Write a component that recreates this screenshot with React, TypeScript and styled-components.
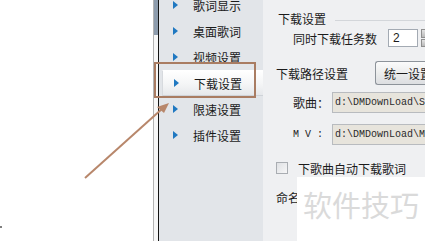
import React from "react";
import styled, { createGlobalStyle } from "styled-components";

const GlobalStyle = createGlobalStyle`
  html, body {
    margin: 0;
    padding: 0;
    background: #ffffff;
  }
  body {
    font-family: "Noto Sans CJK SC", "Noto Sans", sans-serif;
    font-size: 12px;
    color: #1b1b1b;
  }
`;

const Screen = styled.div`
  position: relative;
  width: 425px;
  height: 241px;
  overflow: hidden;
  display: flex;
  background: #ffffff;
`;

const Blank = styled.div`
  width: 153px;
  flex-shrink: 0;
  background: #ffffff;
`;

const ScrollStrip = styled.div`
  width: 4px;
  flex-shrink: 0;
  display: flex;
  flex-direction: column;
  border-left: 1px solid #b3b3b3;
  background: #f7f7f7;
`;

const ScrollThumb = styled.div`
  height: 35px;
  background: #8d9cad;
`;

const DarkEdge = styled.div`
  width: 1px;
  flex-shrink: 0;
  background: #141414;
`;

const Sidebar = styled.ul`
  width: 104px;
  flex-shrink: 0;
  margin: 0;
  padding: 0;
  list-style: none;
  background: #e2e5e9;
  display: flex;
  flex-direction: column;
`;

const MenuItem = styled.li<{ $active?: boolean; $first?: boolean }>`
  height: 26px;
  flex-shrink: 0;
  display: flex;
  align-items: center;
  margin-top: ${({ $first }) => ($first ? "-8px" : "0")};
  margin-left: ${({ $active }) => ($active ? "3px" : "0")};
  padding-left: ${({ $active }) => ($active ? "11px" : "14px")};
  box-sizing: border-box;
  background: ${({ $active }) =>
    $active ? "linear-gradient(#ffffff, #f4f5f6 55%, #e6e8eb)" : "transparent"};
  border-top: ${({ $active }) => ($active ? "1px solid #ffffff" : "none")};
  border-bottom: ${({ $active }) => ($active ? "1px solid #cfd3d8" : "none")};
  border-left: ${({ $active }) => ($active ? "1px solid #d7dade" : "none")};
  font-size: 12px;
  white-space: nowrap;
`;

const Bullet = styled.span`
  width: 0;
  height: 0;
  border-top: 4px solid transparent;
  border-bottom: 4px solid transparent;
  border-left: 5px solid #1f78c1;
  margin-right: 15px;
`;

const Main = styled.div`
  flex: 1;
  min-width: 0;
  background: #eff0f2;
  display: flex;
  flex-direction: column;
  padding-top: 9px;
  white-space: nowrap;
`;

const GroupHead = styled.div`
  height: 19px;
  display: flex;
  align-items: center;
  padding-left: 15px;
`;

const GroupLine = styled.div`
  flex: 1;
  height: 0;
  border-top: 1px solid #d3d6da;
  margin-left: 9px;
  margin-top: 3px;
`;

const Row = styled.div<{ $h: number; $top?: number; $indent: number }>`
  height: ${({ $h }) => $h}px;
  margin-top: ${({ $top }) => $top ?? 0}px;
  padding-left: ${({ $indent }) => $indent}px;
  display: flex;
  align-items: center;
`;

const NumberBox = styled.div`
  width: 30px;
  height: 18px;
  box-sizing: border-box;
  margin-left: 11px;
  border: 1px solid #a3aab3;
  background: #ffffff;
  padding-left: 4px;
  display: flex;
  align-items: center;
  font-family: "Liberation Sans", sans-serif;
  font-size: 12px;
  flex-shrink: 0;
`;

const Spinner = styled.div`
  width: 8px;
  height: 18px;
  margin-left: 3px;
  display: flex;
  flex-direction: column;
  gap: 1px;
  flex-shrink: 0;
`;

const SpinHalf = styled.div`
  flex: 1;
  background: linear-gradient(#e2e2e2, #b9b9b9);
  border: 1px solid #8f8f8f;
  border-right: none;
`;

const PushButton = styled.div`
  height: 24px;
  box-sizing: border-box;
  margin-left: 27px;
  padding: 0 0 0 8px;
  width: 80px;
  flex-shrink: 0;
  border: 1px solid #8d939a;
  border-right: none;
  border-radius: 3px 0 0 3px;
  background: linear-gradient(#fbfbfb, #eceded 50%, #dcdee1);
  display: flex;
  align-items: center;
`;

const FieldLabel = styled.span<{ $mono?: boolean }>`
  width: 39px;
  flex-shrink: 0;
  font-family: ${({ $mono }) =>
    $mono ? '"Liberation Mono", monospace' : '"Noto Sans CJK SC", sans-serif'};
  font-size: ${({ $mono }) => ($mono ? "10px" : "12px")};
`;

const PathField = styled.div`
  height: 21px;
  flex: 1;
  box-sizing: border-box;
  border: 1px solid #b8bbbf;
  border-right: none;
  background: #e7e4dc;
  padding-left: 2px;
  display: flex;
  align-items: center;
  overflow: hidden;
  font-family: "Liberation Mono", monospace;
  font-size: 10px;
  color: #2a2a2a;
`;

const CheckBox = styled.span`
  width: 12px;
  height: 12px;
  box-sizing: border-box;
  border: 1px solid #a9adb2;
  background: linear-gradient(135deg, #dfe1e4, #f6f6f7);
  margin-right: 10px;
  flex-shrink: 0;
`;

const Watermark = styled.div`
  position: absolute;
  left: 297px;
  top: 177px;
  right: 0;
  bottom: 0;
  background: #ffffff;
  padding-left: 6px;
  padding-top: 10px;
  font-family: "Noto Sans CJK SC", sans-serif;
  font-size: 29px;
  line-height: 34px;
  color: #dadada;
  white-space: nowrap;
`;

const Callout = styled.div`
  position: absolute;
  left: 154px;
  top: 62px;
  width: 102px;
  height: 36px;
  box-sizing: border-box;
  border: 2px solid #a97c62;
  pointer-events: none;
`;

const Pointer = styled.svg`
  position: absolute;
  left: 0;
  top: 0;
  pointer-events: none;
`;

const menu = ["歌词显示", "桌面歌词", "视频设置", "下载设置", "限速设置", "插件设置"];

const App = () => {
  return (
    <>
      <GlobalStyle />
      <Screen>
        <Blank />
        <ScrollStrip>
          <ScrollThumb />
        </ScrollStrip>
        <DarkEdge />
        <Sidebar>
          {menu.map((m, i) => (
            <MenuItem key={m} $first={i === 0} $active={m === "下载设置"}>
              <Bullet />
              {m}
            </MenuItem>
          ))}
        </Sidebar>
        <Main>
          <GroupHead>
            下载设置
            <GroupLine />
          </GroupHead>
          <Row $h={20} $indent={30}>
            同时下载任务数
            <NumberBox>2</NumberBox>
            <Spinner>
              <SpinHalf />
              <SpinHalf />
            </Spinner>
          </Row>
          <Row $h={24} $top={13} $indent={13}>
            下载路径设置
            <PushButton>统一设置</PushButton>
          </Row>
          <Row $h={21} $top={7} $indent={30}>
            <FieldLabel>歌曲：</FieldLabel>
            <PathField>d:\DMDownLoad\Song</PathField>
          </Row>
          <Row $h={21} $top={11} $indent={30}>
            <FieldLabel $mono>M V :</FieldLabel>
            <PathField>d:\DMDownLoad\MV</PathField>
          </Row>
          <Row $h={16} $top={15} $indent={13}>
            <CheckBox />
            下歌曲自动下载歌词
          </Row>
          <Row $h={16} $top={13} $indent={13}>
            命名
          </Row>
        </Main>
        <Watermark>软件技巧</Watermark>
        <Callout />
        <Pointer width="425" height="241" viewBox="0 0 425 241">
          <line x1="85" y1="178" x2="163" y2="108" stroke="#b8876b" strokeWidth="2" />
          <polygon points="169,103 157,107 164,113" fill="#b8876b" />
          <circle cx="1" cy="227" r="1" fill="#555" />
        </Pointer>
      </Screen>
    </>
  );
};

export default App;
